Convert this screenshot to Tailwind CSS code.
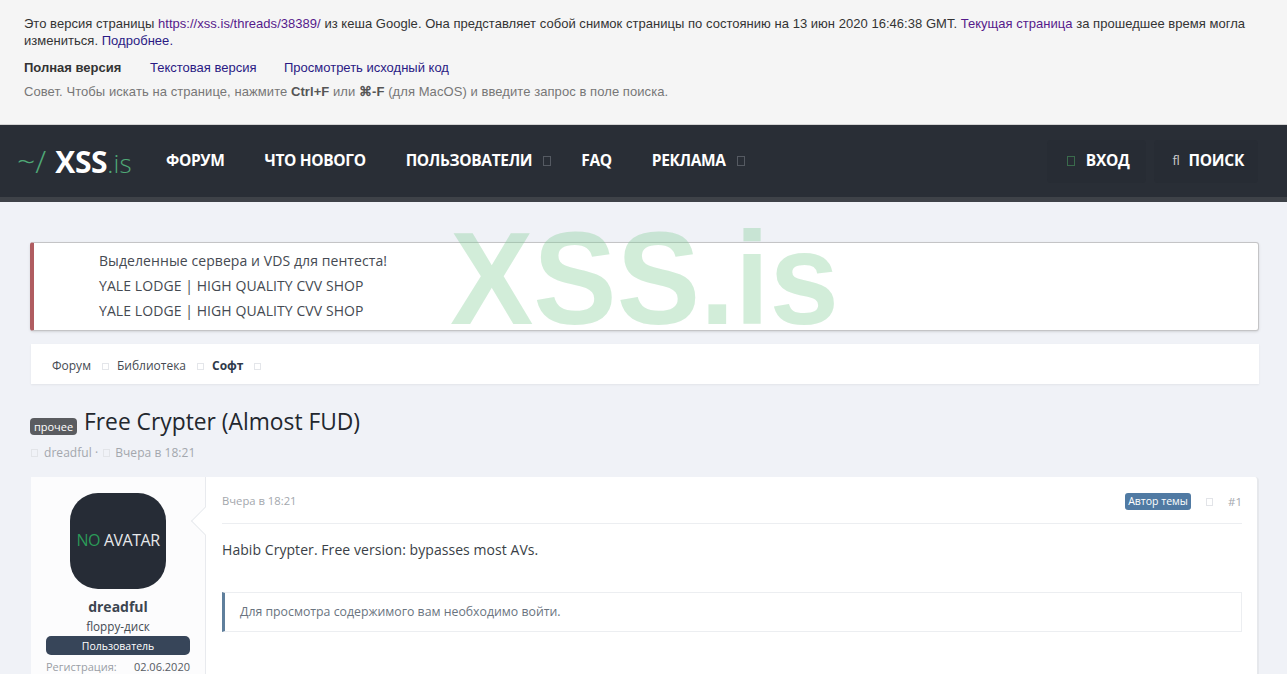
<!DOCTYPE html>
<html lang="en">
<head>
    <meta charset="UTF-8">
    <title>Free Crypter (Almost FUD)</title>
    <script src="https://cdn.jsdelivr.net/npm/@tailwindcss/browser@4"></script>
</head>
<body class="relative h-[674px] overflow-hidden bg-[#f0f2f7] font-['Open_Sans',sans-serif] text-[#2a2f38]">

    <!-- Google cache bar -->
    <div class="h-[125px] border-b border-[#d4d4d4] bg-[#f5f5f5] px-6 pt-[15px] font-['Liberation_Sans',sans-serif] text-[13px] leading-[17px] text-[#333]">
        <p class="w-[1230px] tracking-[0.03px]">Это версия страницы <a class="text-[#551a8b]">https://xss.is/threads/38389/</a> из кеша Google. Она представляет собой снимок страницы по состоянию на 13 июн 2020 16:46:38 GMT. <a class="text-[#551a8b]">Текущая страница</a> за прошедшее время могла измениться. <a class="text-[#2a1a84]">Подробнее.</a></p>
        <div class="mt-[10px] flex h-[17px] items-center">
            <span class="w-[126px] font-bold text-[#333]">Полная версия</span>
            <a class="w-[134px] text-[#2a1a84]">Текстовая версия</a>
            <a class="text-[#2a1a84]">Просмотреть исходный код</a>
        </div>
        <p class="mt-[7px] tracking-[0.07px] text-[#777]">Совет. Чтобы искать на странице, нажмите <b class="text-[#555]">Ctrl+F</b> или <b class="text-[#555]">⌘-F</b> (для MacOS) и введите запрос в поле поиска.</p>
    </div>

    <!-- Nav -->
    <nav class="flex h-[77px] items-start border-b-[5px] border-[#3e4248] bg-[#292e36] text-white">
        <div class="flex h-[72px] w-full items-center pl-[17px] pr-[29px]">
            <div class="flex w-[149px] items-baseline leading-none">
                <span class="mr-[9px] text-[32px] font-light text-[#4fa876]">~/</span>
                <span class="text-[30px] font-bold tracking-[-0.3px]">XSS</span>
                <span class="text-[26px] font-light text-[#4fa876]">.is</span>
            </div>
            <div class="flex items-center pb-px text-[15.5px] font-bold tracking-[-0.35px]">
                <a class="mr-10">ФОРУМ</a>
                <a class="mr-10">ЧТО НОВОГО</a>
                <a>ПОЛЬЗОВАТЕЛИ</a>
                <span class="ml-[11px] mr-[30px] h-[10px] w-2 border border-[#555a62]"></span>
                <a class="mr-10">FAQ</a>
                <a>РЕКЛАМА</a>
                <span class="ml-[11px] h-[10px] w-2 border border-[#555a62]"></span>
            </div>
            <div class="ml-auto flex h-[43px] items-center gap-2 text-[15.5px] font-bold tracking-[-0.3px]">
                <a class="flex h-full items-center rounded-sm bg-[#272c34] pb-px pl-5 pr-4"><span class="mr-[11px] h-[10px] w-2 border border-[#3a6b4c]"></span>ВХОД</a>
                <a class="flex h-full items-center rounded-sm bg-[#272c34] pb-px pl-[19px] pr-[14px]"><span class="mr-[9px] text-[13px] font-normal text-[#ccc]">fl</span>ПОИСК</a>
            </div>
        </div>
    </nav>

    <main class="pl-[30px] pr-[28px] pt-10">
        <!-- Notices -->
        <div class="h-[89px] rounded-[3px] border border-l-4 border-[#c4c4c6] border-l-[#b05c60] bg-white pl-[65px] pt-[5px] text-[14px] leading-[25px] tracking-[0.08px] text-[#454a52] shadow-sm">
            <p>Выделенные сервера и VDS для пентеста!</p>
            <p>YALE LODGE | HIGH QUALITY CVV SHOP</p>
            <p>YALE LODGE | HIGH QUALITY CVV SHOP</p>
        </div>

        <!-- Breadcrumbs -->
        <div class="ml-px mt-[13px] flex h-10 items-center bg-white pl-[21px] pt-[4px] text-[12px] text-[#454a52] shadow-[0_1px_2px_rgba(0,0,0,0.06)]">
            <span>Форум</span>
            <span class="ml-[11px] mr-2 h-[7px] w-[7px] border border-[#e4e6ea]"></span>
            <span>Библиотека</span>
            <span class="ml-[11px] mr-2 h-[7px] w-[7px] border border-[#e4e6ea]"></span>
            <b class="text-[#2f3a4a]">Софт</b>
            <span class="ml-[10px] h-[7px] w-[7px] border border-[#e4e6ea]"></span>
        </div>

        <!-- Thread title -->
        <div class="mt-[21px] flex h-[34px] items-center">
            <span class="mt-[9px] mr-[7px] w-[47px] rounded-[4px] bg-[#5a5c60] text-center text-[11px] leading-[17px] text-white">прочее</span>
            <h1 class="text-[22.8px] leading-none text-[#23272e]">Free Crypter (Almost FUD)</h1>
        </div>
        <div class="mt-[4px] flex h-[20px] items-center text-[12px] tracking-[0.05px] text-[#a3a7ad]">
            <span class="ml-px mr-[6px] h-[8px] w-[7px] border border-[#e2e4e8]"></span>
            <span>dreadful ·</span>
            <span class="mx-[5px] h-[8px] w-[7px] border border-[#e2e4e8]"></span>
            <span>Вчера в 18:21</span>
        </div>

        <!-- Post -->
        <article class="ml-px mt-[14px] flex h-[300px] rounded-sm border-r-2 border-[#e6e8ec] bg-white">
            <aside class="relative flex w-[175px] flex-col items-center border-r border-[#e8eaee] bg-[#fcfcfd] pt-4">
                <div class="flex h-24 w-24 items-center justify-center rounded-[28px] bg-[#262c36] pb-[2px] text-[16px] tracking-[-0.5px]">
                    <span class="text-[#2b9a58]">NO</span><span class="ml-1 text-[#e6e8ea]">AVATAR</span>
                </div>
                <b class="mt-[8px] text-[14px] leading-[20px] text-[#3c4550]">dreadful</b>
                <span class="text-[11.7px] leading-[18px] text-[#444a52]">floppy-диск</span>
                <span class="mt-[1px] h-[19px] w-[144px] rounded-[5px] bg-[#374559] text-center text-[10.5px] leading-[20px] text-white">Пользователь</span>
                <div class="mt-[3px] flex w-[144px] justify-between text-[11px] leading-[18px]">
                    <span class="text-[#9a9ea5]">Регистрация:</span>
                    <span class="text-[#555a62]">02.06.2020</span>
                </div>
                <span class="absolute right-[-10px] top-[34px] h-[20px] w-[20px] rotate-45 border-b border-l border-[#e8eaee] bg-white"></span>
            </aside>
            <div class="flex-1 pl-4 pr-[15px]">
                <div class="flex h-[47px] items-center border-b border-[#eceef1] pt-[3px] text-[#a3a7ad]">
                    <span class="text-[11.25px]">Вчера в 18:21</span>
                    <span class="ml-auto w-[66px] rounded-[3px] bg-[#507aa3] text-center text-[10.5px] leading-[17px] text-white">Автор темы</span>
                    <span class="ml-[15px] h-[8px] w-[7px] border border-[#e2e4e8]"></span>
                    <span class="ml-[15px] text-[11.5px]">#1</span>
                </div>
                <p class="mt-[15px] text-[14px] leading-[22px] tracking-[0.06px] text-[#3a3f47]">Habib Crypter. Free version: bypasses most AVs.</p>
                <div class="mt-[31px] flex h-10 items-center border border-l-[3px] border-[#eceef1] border-l-[#5f7f9c] pl-[15px] pt-px text-[12.3px] text-[#6a7480]">Для просмотра содержимого вам необходимо войти.</div>
            </div>
        </article>
    </main>

    <!-- Watermark -->
    <div class="pointer-events-none absolute left-[450px] top-[213px] origin-center scale-y-[1.06] font-['Liberation_Sans',sans-serif] text-[125px] font-bold leading-[130px] text-[#7ecb93]/35">XSS.is</div>
</body>
</html>
